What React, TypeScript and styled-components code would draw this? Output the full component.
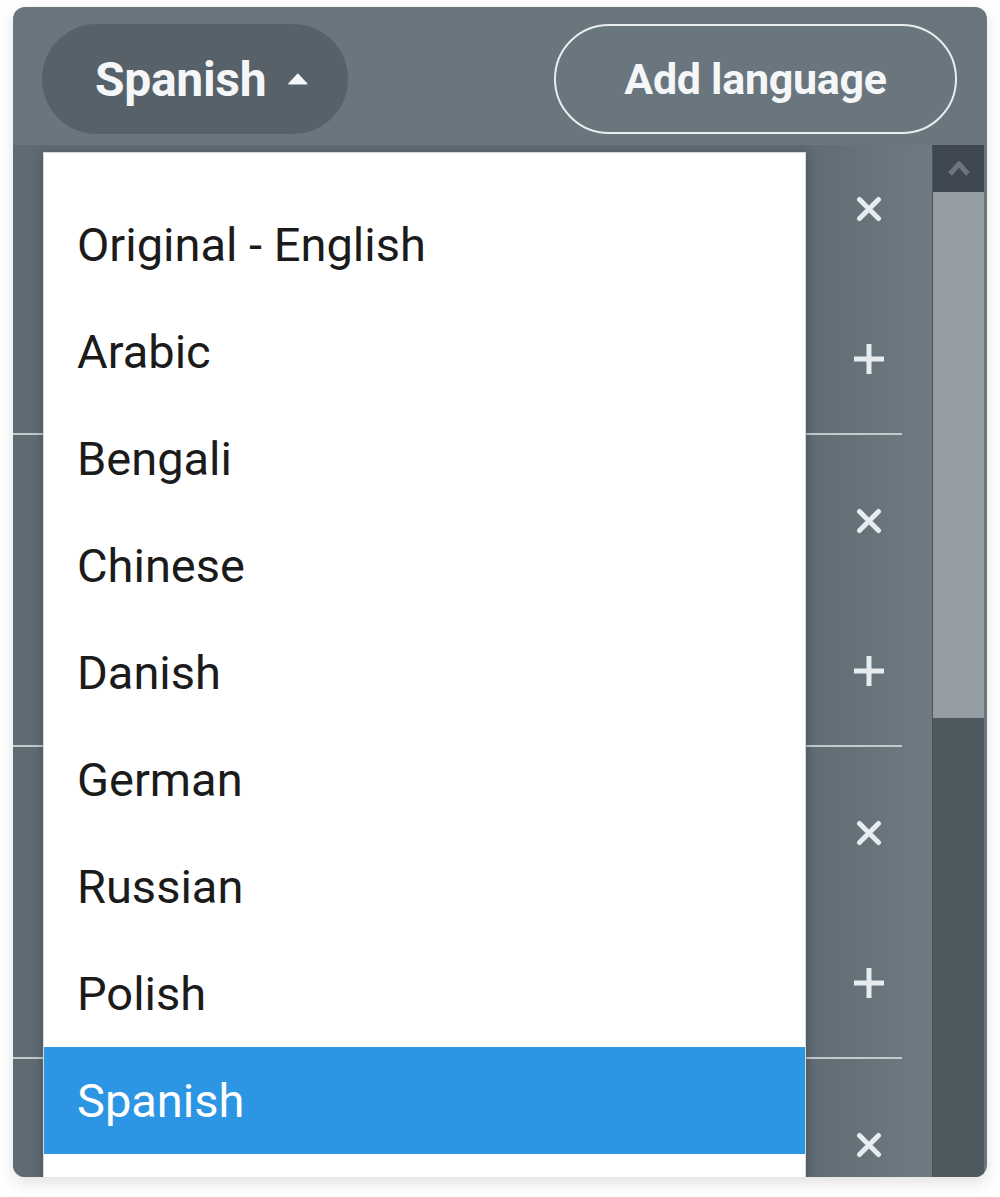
import React from "react";
import styled, { createGlobalStyle } from "styled-components";

const GlobalStyle = createGlobalStyle`
  html, body { margin: 0; padding: 0; background: #ffffff; }
  body { font-family: Roboto, "Open Sans", "Liberation Sans", sans-serif; }
  * { box-sizing: border-box; }
`;

const Page = styled.div`
  padding: 7px 13px 20px 13px;
`;

const Panel = styled.div`
  width: 974px;
  height: 1170px;
  border-radius: 12px;
  overflow: hidden;
  background: #69767d;
  display: flex;
  flex-direction: column;
  box-shadow: 0 6px 16px rgba(0, 0, 0, 0.12);
`;

const Header = styled.div`
  height: 138px;
  flex: none;
  padding: 17px 30px 0 29px;
  display: flex;
  align-items: flex-start;
  justify-content: space-between;
`;

const Pill = styled.button<{ $outlined?: boolean }>`
  height: 110px;
  border-radius: 55px;
  display: flex;
  align-items: center;
  gap: 22px;
  white-space: nowrap;
  font-family: Roboto, "Open Sans", sans-serif;
  font-weight: 700;
  font-size: ${(p) => (p.$outlined ? "43px" : "48px")};
  letter-spacing: -0.3px;
  color: #f4f6f7;
  cursor: pointer;
  background: ${(p) => (p.$outlined ? "transparent" : "#56616a")};
  border: ${(p) => (p.$outlined ? "2px solid #e9edef" : "none")};
  padding: ${(p) => (p.$outlined ? "0" : "0 40px 0 53px")};
  width: ${(p) => (p.$outlined ? "403px" : "306px")};
  justify-content: ${(p) => (p.$outlined ? "center" : "flex-start")};
`;

const Body = styled.div`
  flex: 1;
  display: flex;
  position: relative;
  overflow: hidden;
`;

const List = styled.div`
  flex: 1;
  overflow: hidden;
  background: linear-gradient(90deg, #5f6b73 0%, #5f6b73 86%, #6e7b82 100%);
`;

const Rows = styled.div`
  margin-top: -22px;
`;

const Row = styled.div`
  height: 312px;
  margin-right: 30px;
  border-bottom: 2px solid #c3c9cd;
  display: flex;
  justify-content: flex-end;
`;

const Actions = styled.div`
  width: 66px;
  display: flex;
  flex-direction: column;
  align-items: center;
  padding-top: 73px;
  gap: 121px;
`;

const IconButton = styled.span`
  display: flex;
  align-items: center;
  justify-content: center;
  color: #e7ecee;
`;

const ScrollBar = styled.div`
  width: 52px;
  margin-right: 3px;
  display: flex;
  flex-direction: column;
  border-left: 1px solid #4a545b;
`;

const ScrollUp = styled.div`
  height: 47px;
  background: #3f4850;
  display: flex;
  align-items: center;
  justify-content: center;
`;

const ScrollThumb = styled.div`
  height: 526px;
  background: #969ea4;
`;

const ScrollTrack = styled.div`
  flex: 1;
  background: #4f5960;
`;

const Dropdown = styled.ul`
  position: absolute;
  left: 30px;
  top: 7px;
  width: 763px;
  height: 1060px;
  margin: 0;
  padding: 38px 0 0 0;
  list-style: none;
  background: #ffffff;
  border: 1px solid #d5d9dc;
  box-shadow: 0 2px 10px rgba(0, 0, 0, 0.28);
`;

const Option = styled.li<{ $selected?: boolean }>`
  height: 107px;
  line-height: 107px;
  padding-left: 33px;
  font-family: Roboto, "Open Sans", sans-serif;
  font-size: 47px;
  font-weight: 400;
  letter-spacing: 0;
  color: ${(p) => (p.$selected ? "#ffffff" : "#1b1b1b")};
  background: ${(p) => (p.$selected ? "#2c96e4" : "transparent")};
`;

const Caret = () => (
  <svg width="21" height="12" viewBox="0 0 21 12">
    <path d="M10.5 1 L20 11 L1 11 Z" fill="#f4f6f7" stroke="#f4f6f7" strokeWidth="1.5" strokeLinejoin="round" />
  </svg>
);

const CloseIcon = () => (
  <svg width="26" height="26" viewBox="0 0 26 26">
    <path d="M3.5 3.5 L22.5 22.5 M22.5 3.5 L3.5 22.5" stroke="currentColor" strokeWidth="5" strokeLinecap="round" />
  </svg>
);

const PlusIcon = () => (
  <svg width="32" height="32" viewBox="0 0 32 32">
    <path d="M16 1 V31 M1 16 H31" stroke="currentColor" strokeWidth="5" />
  </svg>
);

const ChevronUp = () => (
  <svg width="22" height="16" viewBox="0 0 22 16">
    <path d="M2 13 L11 3 L20 13" fill="none" stroke="#6d757c" strokeWidth="5" strokeLinejoin="round" />
  </svg>
);

const languages = [
  "Original - English",
  "Arabic",
  "Bengali",
  "Chinese",
  "Danish",
  "German",
  "Russian",
  "Polish",
  "Spanish",
];

export default function App() {
  return (
    <>
      <GlobalStyle />
      <Page>
        <Panel>
          <Header>
            <Pill>
              Spanish
              <Caret />
            </Pill>
            <Pill $outlined>Add language</Pill>
          </Header>
          <Body>
            <List>
              <Rows>
                {[0, 1, 2, 3].map((i) => (
                  <Row key={i}>
                    <Actions>
                      <IconButton>
                        <CloseIcon />
                      </IconButton>
                      <IconButton>
                        <PlusIcon />
                      </IconButton>
                    </Actions>
                  </Row>
                ))}
              </Rows>
            </List>
            <ScrollBar>
              <ScrollUp>
                <ChevronUp />
              </ScrollUp>
              <ScrollThumb />
              <ScrollTrack />
            </ScrollBar>
            <Dropdown>
              {languages.map((l) => (
                <Option key={l} $selected={l === "Spanish"}>
                  {l}
                </Option>
              ))}
            </Dropdown>
          </Body>
        </Panel>
      </Page>
    </>
  );
}
